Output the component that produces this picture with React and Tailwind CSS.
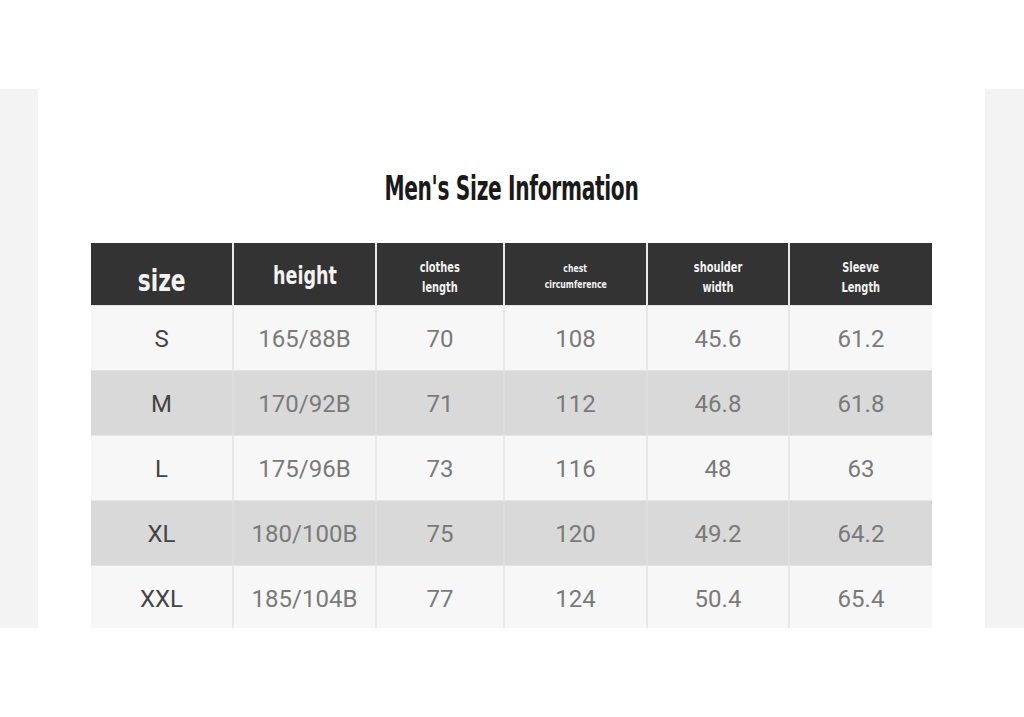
import React from "react";

const headers = [
  { lines: ["size"], cls: "text-[31px] leading-none pt-[12px]" },
  { lines: ["height"], cls: "text-[25px] leading-none pt-[3px]" },
  { lines: ["clothes", "length"], cls: "text-[14px] leading-[20px] pt-[5px]" },
  { lines: ["chest", "circumference"], cls: "text-[11px] leading-[16px] pt-[5px]" },
  { lines: ["shoulder", "width"], cls: "text-[14px] leading-[20px] pt-[5px]" },
  { lines: ["Sleeve", "Length"], cls: "text-[14px] leading-[20px] pt-[5px]" },
];

const rows = [
  ["S", "165/88B", "70", "108", "45.6", "61.2"],
  ["M", "170/92B", "71", "112", "46.8", "61.8"],
  ["L", "175/96B", "73", "116", "48", "63"],
  ["XL", "180/100B", "75", "120", "49.2", "64.2"],
  ["XXL", "185/104B", "77", "124", "50.4", "65.4"],
];

const cols = "grid grid-cols-[141px_143px_128px_143px_142px_144px]";

export default function App() {
  return (
    <div className="w-[1024px] h-[717px] bg-white font-['Roboto',sans-serif]">
      <div className="h-[89px]" />
      <div className="flex h-[539px] overflow-hidden">
        <div className="w-[38px] bg-[#f3f3f3]" />
        <div className="flex-1 bg-white flex flex-col items-center pt-[79px]">
          <h1 className="h-[40px] flex items-center text-[34px] font-bold text-[#1a1a1a] font-['DejaVu_Sans_Condensed','DejaVu_Sans',sans-serif] tracking-[-0.5px] scale-x-[0.66]">
            Men's Size Information
          </h1>
          <div className="mt-[35px] w-[841px]">
            <div className={`${cols} h-[62px] bg-[#333333]`}>
              {headers.map((h, i) => (
                <div
                  key={i}
                  className={`flex flex-col items-center justify-center text-[#f2f2f2] font-bold font-['DejaVu_Sans_Condensed','DejaVu_Sans',sans-serif] ${
                    i > 0 ? "border-l-2 border-[#e9e9e9]" : ""
                  } ${h.cls}`}
                >
                  {h.lines.map((l) => (
                    <span key={l} className="scale-x-[0.78]">{l}</span>
                  ))}
                </div>
              ))}
            </div>
            {rows.map((r, ri) => (
              <div
                key={ri}
                className={`${cols} h-[65px] border-t border-[#e4e4e4] ${
                  ri % 2 === 1 ? "bg-[#d9d9d9]" : "bg-[#f7f7f7]"
                }`}
              >
                {r.map((c, ci) => (
                  <div
                    key={ci}
                    className={`flex items-center justify-center text-[24px] pt-[2px] ${
                      ci === 0 ? "text-[#444444]" : "text-[#7a7a7a]"
                    } ${ci > 0 ? (ri % 2 === 1 ? "border-l-2 border-[#dedede]" : "border-l-2 border-[#e8e8e8]") : ""}`}
                  >
                    {c}
                  </div>
                ))}
              </div>
            ))}
          </div>
        </div>
        <div className="w-[39px] bg-[#f3f3f3]" />
      </div>
    </div>
  );
}
